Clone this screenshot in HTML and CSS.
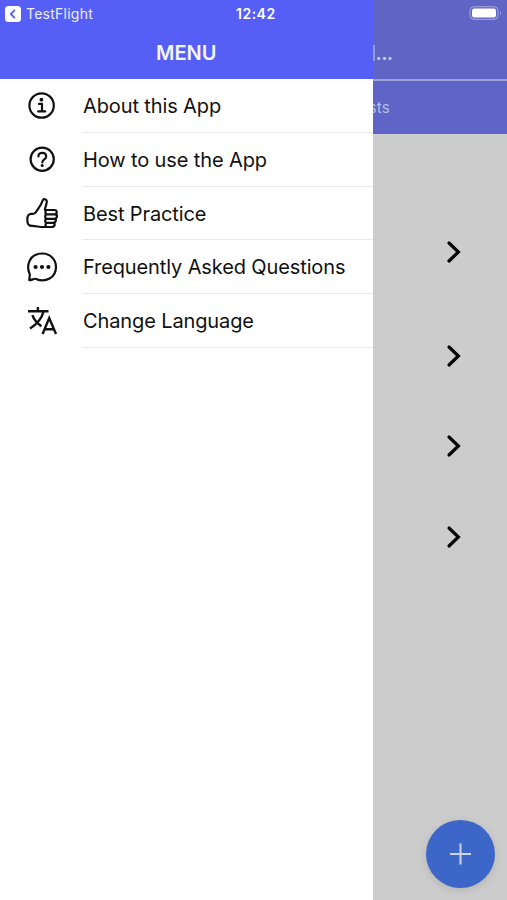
FILE: index.html
```html
<!DOCTYPE html>
<html lang="en">
<head>
<meta charset="utf-8">
<title>Menu</title>
<link rel="stylesheet" href="styles.css">
</head>
<body>
<div class="screen">
  <aside class="drawer">
    <header class="drawer-header">
      <div class="status">
        <svg class="back" viewBox="0 0 16 16"><rect width="16" height="16" rx="3.5" fill="#fff"/><path d="M9.4 4.4 5.8 8l3.6 3.6" fill="none" stroke="#555ff6" stroke-width="1.8" stroke-linecap="round" stroke-linejoin="round"/></svg>
        <span class="source">TestFlight</span>
        <span class="time">12:42</span>
      </div>
      <h1>MENU</h1>
    </header>
    <nav>
      <a class="item"><svg class="icon" viewBox="0 0 36 36"><circle cx="17.6" cy="17.5" r="12.2"/><path d="M15 15.9h3v7M14.2 23.4h7"/><circle class="dot" cx="17.4" cy="11.7" r="1.9"/></svg><span class="label">About this App</span></a>
      <a class="item"><svg class="icon" viewBox="0 0 36 36"><circle cx="18.2" cy="18.2" r="11.6"/><path d="M14.4 15.4c0-4.8 7.8-4.6 7.8 0 0 3-3.9 3-3.9 6"/><circle class="dot" cx="18.2" cy="24.5" r="1.5"/></svg><span class="label">How to use the App</span></a>
      <a class="item"><svg class="icon" viewBox="0 0 36 36"><path d="M21 15c-.5-1.8 1.8-5.2 1.8-8.4 0-2.6-3.4-3.4-4.3-.8-1.3 4.4-4.4 8.2-7 11.8-1 1.4-2 1.3-4 1.3-3.6 0-4.2 2.2-4.2 6 0 4.3 1 6 4.8 6 4 0 5.3.8 8.500 1.100h10.800c3.700 0 4.100-3.500 2.100-4.100 2.800-.5 3-3.600 1.400-4.100 2.700-.6 2.600-4.100.7-4.500 1.900-.8 1.400-4.300-1-4.300z"/><path d="M23 15c-2.100 0-2.100 4.300 0 4.300h8.500M22.800 19.300c-2.100 0-2.100 4.500 0 4.500h8M22.800 23.800c-2.100 0-2.100 4.100 0 4.100h6.800M22.800 27.900c-1.600 0-1.800 4.100 0 4.100"/></svg><span class="label">Best Practice</span></a>
      <a class="item"><svg class="icon" viewBox="0 0 36 36"><path d="M5.3 31.200c-.2-2.400 1.100-4.800.3-6.500C2.200 17.400 4.700 4.500 18.300 4.500c8 0 13.700 6 13.700 13.400 0 10.700-10.500 16.300-20 12-1.800-.8-4 1.400-6.700 1.300z"/><circle class="dot" cx="11.600" cy="18" r="2.100"/><circle class="dot" cx="18" cy="18" r="2.100"/><circle class="dot" cx="24.400" cy="18" r="2.100"/></svg><span class="label">Frequently Asked Questions</span></a>
      <a class="item"><svg class="icon square" viewBox="0 0 36 36"><path d="M4 8.300h20.500M13.900 4v4.300M19.700 8.300C17.900 15 12.500 21.500 6 25.500M8.400 12.200c1.700 4.800 4.800 8.200 9 11M18.600 31l6.600-16L32 31M20.800 26.200h9.200"/></svg><span class="label">Change Language</span></a>
    </nav>
  </aside>
  <main class="page">
    <header class="page-header">
      <svg class="battery" viewBox="0 0 34 14"><rect x="1" y=".7" width="28" height="12.600" rx="4" fill="none" stroke="#a6a8df"/><rect x="3" y="2.500" width="24" height="9" rx="2.200" fill="#fff"/><path d="M31 5v4q1-.7 1-2t-1-2" fill="#a6a8df"/></svg>
      <div class="page-title"><i></i>...</div>
    </header>
    <div class="tabs"><span>sts</span></div>
    <div class="rows">
      <div class="row first"><svg class="chevron" viewBox="0 0 16 24"><path d="m3 3 9.400 9L3 21"/></svg></div>
      <div class="row second"><svg class="chevron" viewBox="0 0 16 24"><path d="m3 3 9.400 9L3 21"/></svg></div>
      <div class="row"><svg class="chevron" viewBox="0 0 16 24"><path d="m3 3 9.400 9L3 21"/></svg></div>
      <div class="row"><svg class="chevron" viewBox="0 0 16 24"><path d="m3 3 9.400 9L3 21"/></svg></div>
    </div>
    <button class="fab" aria-label="Add"><svg viewBox="0 0 69 68"><path d="M34.500 23.500v21M24 34h21"/></svg></button>
  </main>
</div>
</body>
</html>
```
FILE: styles.css
```css
* { box-sizing: border-box; }
body { margin: 0; font-family: Inter, "Liberation Sans", sans-serif; }
.screen { display: flex; width: 507px; height: 900px; overflow: hidden; position: relative; }
.drawer { width: 372.5px; background: #fff; flex: none; }
.drawer-header { height: 79px; background: #555ff6; color: #fff; }
.status { height: 28px; display: flex; align-items: center; padding-left: 5px; }
.back { width: 16px; height: 16px; }
.source { font-size: 14px; line-height: 28px; margin-left: 5px; width: 68px; letter-spacing: .25px; color: #eceefe; }
.time { font-size: 14px; line-height: 28px; font-weight: 600; margin-left: 142px; letter-spacing: .5px; }
h1 { margin: 0; font-size: 20px; line-height: 50px; font-weight: 600; text-align: center; color: #f4f5ff; }
.item { height: 53.75px; display: flex; align-items: stretch; }
.icon { width: 36px; height: 36px; margin: 8.5px 18px 0 23.5px; flex: none; fill: none; stroke: #111; stroke-width: 2.2; stroke-linecap: round; stroke-linejoin: round; }
.icon.square { stroke-linecap: butt; stroke-width: 2.4; stroke-linejoin: miter; }
.icon .dot { fill: #111; stroke: none; }
.label { flex: 1; margin-left: 5.5px; font-size: 20px; line-height: 55px; letter-spacing: -.12px; color: #111; border-bottom: 1px solid #e9e9e9; white-space: nowrap; }
.page { flex: 1; background: #ccc; position: relative; }
.page-header { height: 81px; background: #6064c5; border-bottom: 2px solid #9fa5da; }
.battery { display: block; width: 34px; height: 14px; margin-left: 96px; position: relative; top: 6px; }
.page-title { display: flex; height: 28px; margin-top: 25px; align-items: center; font-size: 20px; font-weight: 600; line-height: 28px; color: #c6c9eb; letter-spacing: -.7px; }
.page-title i { width: 2px; height: 16px; background: #989ddb; margin-right: 1px; }
.tabs { height: 53px; background: #5e65c7; overflow: hidden; color: #b9bde4; font-size: 15px; line-height: 53px; }
.tabs span { display: block; margin-left: -4px; letter-spacing: .3px; }
.row { height: 90.5px; display: flex; align-items: center; }
.row.first { height: 104px; }
.row.second { height: 104px; }
.rows { padding-top: 66px; }
.row.second + .row { margin-top: -7px; }
.chevron { width: 16px; height: 24px; margin-left: 73.5px; fill: none; stroke: #050505; stroke-width: 3.2; stroke-linecap: round; stroke-linejoin: miter; }
.fab { position: absolute; left: 53.5px; top: 819.5px; width: 69px; height: 68px; padding: 0; border: 0; border-radius: 50%; background: #3c66c8; box-shadow: 0 2px 8px rgba(0,0,0,.12); }
.fab svg { display: block; width: 69px; height: 68px; fill: none; stroke: #cbd5ee; stroke-width: 2; }
```
